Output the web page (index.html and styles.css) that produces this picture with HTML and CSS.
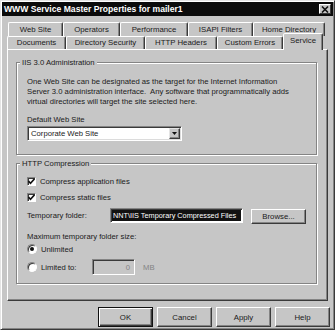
FILE: index.html
```html
<!DOCTYPE html>
<html lang="en">

<head>
    <meta charset="UTF-8">
    <title>WWW Service Master Properties for mailer1</title>
    <link rel="stylesheet" href="styles.css">
</head>

<body>
    <div class="window">
        <div class="titlebar">
            <span class="title">WWW Service Master Properties for mailer1</span>
            <span class="close">
                <svg width="8" height="7" viewBox="0 0 8 7"><path d="M1 0.5 L7 6.5 M7 0.5 L1 6.5" stroke="#111" stroke-width="1.6" fill="none"/></svg>
            </span>
        </div>

        <div class="tabs">
            <div class="tab-row back">
                <div class="tab">Web Site</div>
                <div class="tab">Operators</div>
                <div class="tab">Performance</div>
                <div class="tab">ISAPI Filters</div>
                <div class="tab">Home Directory</div>
            </div>
            <div class="tab-row front">
                <div class="tab">Documents</div>
                <div class="tab">Directory Security</div>
                <div class="tab">HTTP Headers</div>
                <div class="tab">Custom Errors</div>
                <div class="tab active">Service</div>
            </div>
        </div>

        <div class="panel">
            <fieldset class="group">
                <legend>IIS 3.0 Administration</legend>
                <div class="group-body admin-body">
                    <p class="note">One Web Site can be designated as the target for the Internet Information<br>Server 3.0 administration interface.&nbsp; Any software that programmatically adds<br>virtual directories will target the site selected here.</p>
                    <div class="field-label">Default Web Site</div>
                    <div class="combo">
                        <span class="combo-text">Corporate Web Site</span>
                        <span class="combo-btn">
                            <svg width="5" height="3" viewBox="0 0 5 3"><path d="M0 0 H5 L2.5 3 Z" fill="#111"/></svg>
                        </span>
                    </div>
                </div>
            </fieldset>

            <fieldset class="group compress">
                <legend>HTTP Compression</legend>
                <div class="group-body compress-body">
                    <div class="option">
                        <span class="check"><svg width="7" height="7" viewBox="0 0 7 7"><path d="M0.5 3 L2.5 5.2 L6.5 0.8" stroke="#111" stroke-width="1.6" fill="none"/></svg></span>
                        Compress application files
                    </div>
                    <div class="option second">
                        <span class="check"><svg width="7" height="7" viewBox="0 0 7 7"><path d="M0.5 3 L2.5 5.2 L6.5 0.8" stroke="#111" stroke-width="1.6" fill="none"/></svg></span>
                        Compress static files
                    </div>
                    <div class="folder-row">
                        <span class="folder-label">Temporary folder:</span>
                        <div class="path-input"><span class="sel">NNT\IIS Temporary Compressed Files</span></div>
                        <button class="btn browse">Browse...</button>
                    </div>
                    <div class="size-label">Maximum temporary folder size:</div>
                    <div class="option radio-row">
                        <span class="radio on"></span>
                        Unlimited
                    </div>
                    <div class="limit-row">
                        <div class="option limit-option">
                            <span class="radio"></span>
                            Limited to:
                        </div>
                        <div class="num-input">0</div>
                        <span class="unit">MB</span>
                    </div>
                </div>
            </fieldset>
        </div>

        <div class="buttons">
            <button class="btn default">OK</button>
            <button class="btn">Cancel</button>
            <button class="btn">Apply</button>
            <button class="btn">Help</button>
        </div>
    </div>
</body>

</html>
```

FILE: styles.css
```css
body {
    font-family: "Liberation Sans", Arial, sans-serif;
    font-size: 7.7px;
    color: #1a1a1a;
    background-color: #c6c6c6;
    margin: 0;
    padding: 0;
}

.window {
    width: 335px;
    height: 330px;
    box-sizing: border-box;
    border: 1px solid;
    border-color: #e4e4e4 #3a3a3a #3a3a3a #e4e4e4;
    box-shadow: inset 1px 1px #fff, inset -1px -1px #848484;
    padding: 1px;
    background-color: #c6c6c6;
}

/* title bar */
.titlebar {
    height: 14px;
    background-color: #0b0b0b;
    display: flex;
    align-items: center;
    justify-content: space-between;
    padding: 0 2px;
}

.title {
    color: #fff;
    font-weight: bold;
    font-size: 8.6px;
}

.close {
    width: 12px;
    height: 10px;
    box-sizing: border-box;
    background-color: #c6c6c6;
    border: 1px solid;
    border-color: #fff #3a3a3a #3a3a3a #fff;
    display: flex;
    align-items: center;
    justify-content: center;
}

/* tabs */
.tabs {
    margin-top: 6px;
}

.tab-row {
    display: grid;
}

.tab-row.back {
    grid-template-columns: 55px 57px 68px 65px 72px;
    grid-template-rows: 14px;
    padding-left: 6px;
}

.tab-row.front {
    grid-template-columns: 59px 79px 72px 66px 40px;
    grid-template-rows: 13px;
    padding-left: 5px;
}

.tab {
    box-sizing: border-box;
    border: 1px solid;
    border-bottom: 0;
    border-color: #fff #3a3a3a transparent #fff;
    border-radius: 2px 2px 0 0;
    box-shadow: inset -1px 0 #848484;
    text-align: center;
    font-size: 7.8px;
    line-height: 12px;
    white-space: nowrap;
}

.tab-row.back .tab {
    line-height: 14px;
}

.tab.active {
    height: 17px;
    align-self: end;
    margin-bottom: -1px;
    position: relative;
    z-index: 1;
    background-color: #c6c6c6;
    line-height: 13px;
}

/* property page */
.panel {
    margin-left: 5px;
    width: 321px;
    height: 252px;
    box-sizing: border-box;
    border: 1px solid;
    border-color: #fff #3a3a3a #3a3a3a #fff;
    box-shadow: inset -1px -1px #848484;
    padding: 8px 10px 0 8px;
}

.group {
    margin: 0;
    padding: 0;
    min-width: 0;
    border: 1px solid #848484;
    box-shadow: inset 1px 1px #fff, 1px 1px #fff;
}

.group legend {
    margin-left: 3px;
    padding: 0 2px;
    line-height: 9px;
    background-color: #c6c6c6;
}

.group.compress {
    margin-top: 4px;
}

.group-body {
    padding-left: 10px;
}

.admin-body {
    padding-top: 10px;
    padding-bottom: 13px;
}

.note {
    margin: 0;
    line-height: 10px;
}

.field-label {
    margin-top: 8px;
    line-height: 10px;
}

.combo {
    margin-top: 1px;
    width: 155px;
    height: 15px;
    box-sizing: border-box;
    border: 1px solid;
    border-color: #848484 #fff #fff #848484;
    box-shadow: inset 1px 1px #3a3a3a, inset -1px -1px #dcdcdc;
    background-color: #fff;
    display: flex;
    align-items: center;
}

.combo-text {
    padding-left: 3px;
}

.combo-btn {
    margin-left: auto;
    margin-right: 1px;
    width: 11px;
    height: 11px;
    box-sizing: border-box;
    background-color: #c6c6c6;
    border: 1px solid;
    border-color: #e4e4e4 #3a3a3a #3a3a3a #e4e4e4;
    box-shadow: inset -1px -1px #848484;
    display: flex;
    align-items: center;
    justify-content: center;
}

/* compression group */
.compress-body {
    padding-top: 7px;
    padding-bottom: 8px;
}

.option {
    display: flex;
    align-items: center;
    height: 12px;
    white-space: nowrap;
}

.option.second {
    margin-top: 4px;
}

.check {
    width: 9px;
    height: 9px;
    box-sizing: border-box;
    border: 1px solid;
    border-color: #848484 #fff #fff #848484;
    box-shadow: inset 1px 1px #3a3a3a;
    background-color: #fff;
    margin-right: 4px;
    display: flex;
    align-items: center;
    justify-content: center;
}

.radio {
    width: 10px;
    height: 10px;
    box-sizing: border-box;
    border-radius: 50%;
    border: 1px solid;
    border-color: #848484 #fff #fff #848484;
    box-shadow: inset 1px 1px #3a3a3a;
    background-color: #fff;
    margin-right: 4px;
    display: flex;
    align-items: center;
    justify-content: center;
}

.radio.on::after {
    content: "";
    width: 4px;
    height: 4px;
    border-radius: 50%;
    background-color: #111;
}

.folder-row {
    margin-top: 5px;
    display: flex;
    align-items: flex-start;
}

.folder-label {
    width: 83px;
    line-height: 15px;
}

.path-input {
    width: 133px;
    height: 15px;
    box-sizing: border-box;
    border: 1px solid;
    border-color: #848484 #fff #fff #848484;
    box-shadow: inset 1px 1px #3a3a3a;
    background-color: #fff;
    padding: 1px;
    display: flex;
    overflow: hidden;
}

.sel {
    flex: 1;
    background-color: #111;
    color: #fff;
    white-space: nowrap;
    font-size: 7.3px;
    line-height: 11px;
    padding-left: 1px;
    overflow: hidden;
}

.size-label {
    margin-top: 8px;
    line-height: 10px;
}

.radio-row {
    margin-top: 1px;
}

.limit-row {
    margin-top: 4px;
    display: flex;
    align-items: center;
}

.limit-option {
    width: 65px;
}

.num-input {
    width: 43px;
    height: 16px;
    box-sizing: border-box;
    border: 1px solid;
    border-color: #848484 #fff #fff #848484;
    box-shadow: inset 1px 1px #3a3a3a;
    background-color: #c6c6c6;
    color: #848484;
    display: flex;
    align-items: center;
    justify-content: flex-end;
    padding-right: 4px;
}

.unit {
    margin-left: 8px;
    color: #848484;
}

/* buttons */
.btn {
    width: 55px;
    height: 20px;
    box-sizing: border-box;
    padding: 0;
    border: 1px solid;
    border-color: #fff #3a3a3a #3a3a3a #fff;
    box-shadow: inset -1px -1px #848484;
    background-color: #c6c6c6;
    font-family: inherit;
    font-size: 7.8px;
    font-weight: normal;
    color: #1a1a1a;
}

.btn.default {
    border-color: #111;
    box-shadow: inset 1px 1px #fff, inset -1px -1px #3a3a3a, inset -2px -2px #848484;
}

.btn.browse {
    height: 15px;
    margin-left: 8px;
    margin-top: 1px;
}

.buttons {
    display: flex;
    justify-content: flex-end;
    gap: 4px;
    margin-top: 6px;
    padding-right: 3px;
}
```
